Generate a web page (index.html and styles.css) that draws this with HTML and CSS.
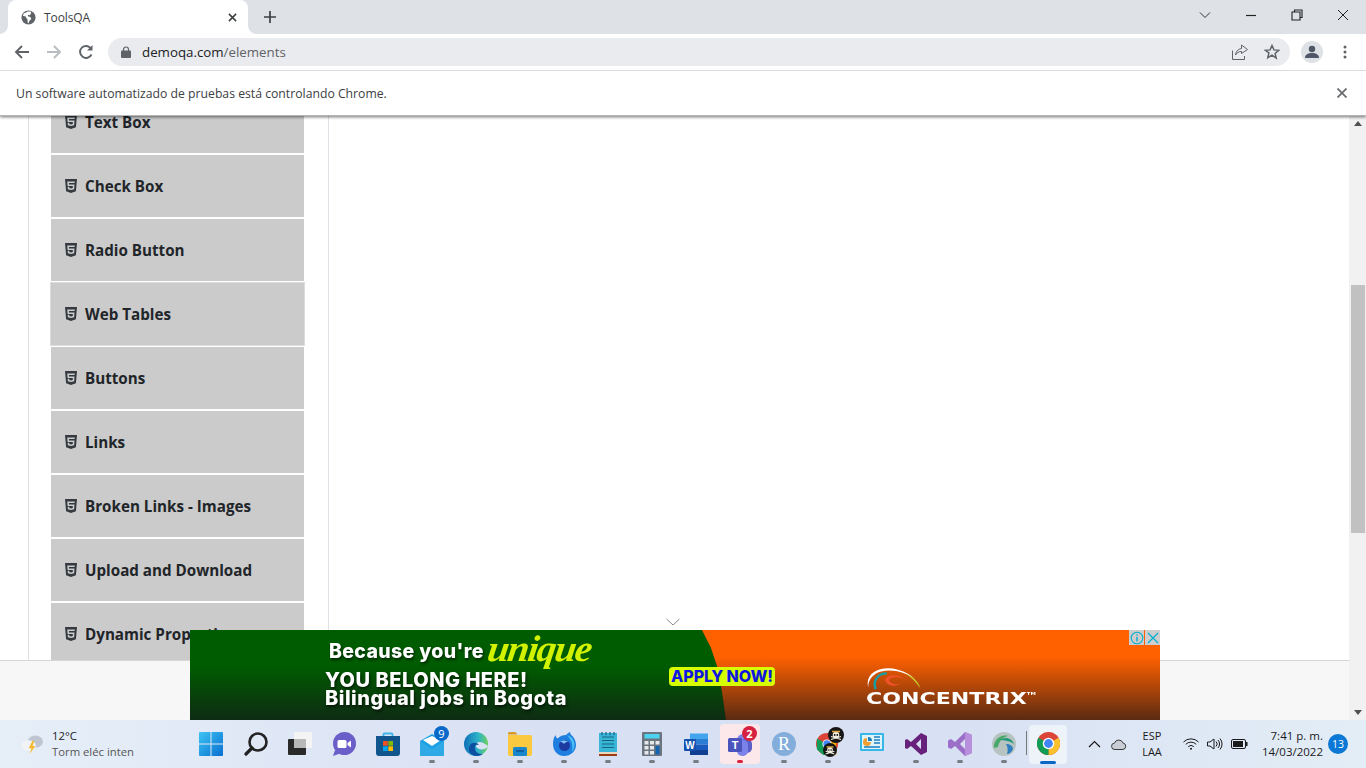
FILE: index.html
```html
<!DOCTYPE html>
<html lang="es">
<head>
<meta charset="utf-8">
<title>ToolsQA</title>
<link rel="stylesheet" href="styles.css">
</head>
<body>
<div class="screen">
  <header class="chrome">
    <div class="tabstrip">
      <div class="tab">
        <svg class="favicon" viewBox="0 0 16 16"><circle cx="8" cy="8" r="7.5" fill="#5f6368"/><path d="M7 1.500 5 3 3 3.500 2 6l3 1 1 2 1 1v3l1 1.500 1-3 2-2-1-2-2-.5-1-1 1-1 1.500.5L11 3l-1-1.500z" fill="#fff"/></svg>
        <span class="tab-title">ToolsQA</span>
        <svg class="tab-close" viewBox="0 0 10 10"><path d="M1 1l8 8M9 1l-8 8" stroke="#3c4043" stroke-width="1.700"/></svg>
      </div>
      <svg class="newtab" viewBox="0 0 12 12"><path d="M6 0v12M0 6h12" stroke="#3c4043" stroke-width="1.700"/></svg>
      <div class="winctl">
        <span class="winbtn"><svg class="wi" viewBox="0 0 12 12"><path d="M1 3.500l5 5 5-5" fill="none" stroke="#333" stroke-width="1"/></svg></span>
        <span class="winbtn"><svg class="wi" viewBox="0 0 12 12"><path d="M1 6.500h10" stroke="#222" stroke-width="1.200"/></svg></span>
        <span class="winbtn"><svg class="wi" viewBox="0 0 12 12"><path d="M3.500 2.500V1h7.500v7.500H9M1 3h8v8H1z" fill="none" stroke="#222" stroke-width="1.100"/></svg></span>
        <span class="winbtn"><svg class="wi" viewBox="0 0 12 12"><path d="M1 1l10 10M11 1L1 11" stroke="#222" stroke-width="1"/></svg></span>
      </div>
    </div>
    <div class="toolbar">
      <svg class="nav" viewBox="0 0 16 16"><path d="M15 8H2M8 2 2 8l6 6" fill="none" stroke="#5f6368" stroke-width="1.900"/></svg>
      <svg class="nav" viewBox="0 0 16 16"><path d="M1 8h13M8 2l6 6-6 6" fill="none" stroke="#b9bcc0" stroke-width="1.900"/></svg>
      <svg class="nav" viewBox="0 0 16 16"><path d="M13.500 10.500A6 6 0 1 1 13 4.500" fill="none" stroke="#5f6368" stroke-width="1.900"/><path d="M14.500 1v5.500H9z" fill="#5f6368"/></svg>
      <div class="omnibox">
        <svg class="lock" viewBox="0 0 10 12"><path d="M2.500 5V3.500a2.500 2.500 0 0 1 5 0V5" fill="none" stroke="#5f6368" stroke-width="1.200"/><rect y="4.500" width="10" height="7.500" rx="1" fill="#5f6368"/></svg>
        <span class="url"><span class="host">demoqa.com</span>/elements</span>
        <svg class="omni-ic" viewBox="0 0 16 16"><path d="M.5 6.500v9h12V12" fill="none" stroke="#5f6368"/><path d="M9.500 1l6 4.500-6 4V7.500C7 7.500 5 8.500 3.500 11c.3-3.500 2.500-6 6-6.500z" fill="none" stroke="#5f6368"/></svg>
        <svg class="omni-ic" viewBox="0 0 16 16"><path d="M8 1.500l1.900 4.400 4.800.4-3.600 3.100 1.100 4.700L8 11.100l-4.200 2.500 1.100-4.700L1.300 6.300l4.800-.4z" fill="none" stroke="#5f6368" stroke-width="1.500"/></svg>
      </div>
      <span class="avatar"><svg viewBox="0 0 14 14"><circle cx="7" cy="4" r="3.200" fill="#4d5766"/><path d="M0 13c0-3.500 3-5 7-5s7 1.500 7 5z" fill="#4d5766"/></svg></span>
      <svg class="dots" viewBox="0 0 4 14"><circle cx="2" cy="2" r="1.500" fill="#5f6368"/><circle cx="2" cy="7" r="1.500" fill="#5f6368"/><circle cx="2" cy="12" r="1.500" fill="#5f6368"/></svg>
    </div>
    <div class="infobar">
      <span class="info-text">Un software automatizado de pruebas está controlando Chrome.</span>
      <svg class="info-close" viewBox="0 0 10 10"><path d="M.5.500l9 9M9.500.500l-9 9" stroke="#6a6d70" stroke-width="1.800"/></svg>
    </div>
  </header>

  <main class="viewport">
    <div class="page">
      <div class="content">
        <nav class="sidebar">
          <ul class="menu">
            <li class="item"><svg class="h5" viewBox="0 0 384 512"><path d="M0 32l34.900 395.800L191.500 480l157.600-52.200L384 32H0zm308.200 127.900H124.400l4.100 49.400h175.600l-13.600 148.400-97.900 27v.3h-1.100l-98.700-27.300-6-75.800h47.700L138 320l53.500 14.500 53.700-14.500 6-62.200H84.300L71.500 112.200h241.100l-4.400 47.700z"/></svg>Text Box</li>
            <li class="item"><svg class="h5" viewBox="0 0 384 512"><path d="M0 32l34.900 395.800L191.500 480l157.600-52.200L384 32H0zm308.200 127.900H124.400l4.100 49.400h175.600l-13.600 148.400-97.900 27v.3h-1.100l-98.700-27.300-6-75.800h47.700L138 320l53.500 14.500 53.700-14.500 6-62.200H84.300L71.500 112.200h241.100l-4.400 47.700z"/></svg>Check Box</li>
            <li class="item"><svg class="h5" viewBox="0 0 384 512"><path d="M0 32l34.900 395.800L191.500 480l157.600-52.200L384 32H0zm308.200 127.900H124.400l4.100 49.400h175.600l-13.600 148.400-97.900 27v.3h-1.100l-98.700-27.300-6-75.800h47.700L138 320l53.500 14.500 53.700-14.500 6-62.200H84.300L71.500 112.200h241.100l-4.400 47.700z"/></svg>Radio Button</li>
            <li class="item item-hover"><svg class="h5" viewBox="0 0 384 512"><path d="M0 32l34.900 395.800L191.500 480l157.600-52.200L384 32H0zm308.200 127.900H124.400l4.100 49.400h175.600l-13.600 148.400-97.900 27v.3h-1.100l-98.700-27.300-6-75.800h47.700L138 320l53.500 14.500 53.700-14.500 6-62.200H84.300L71.500 112.200h241.100l-4.400 47.700z"/></svg>Web Tables</li>
            <li class="item"><svg class="h5" viewBox="0 0 384 512"><path d="M0 32l34.900 395.800L191.500 480l157.600-52.200L384 32H0zm308.200 127.900H124.400l4.100 49.400h175.600l-13.600 148.400-97.900 27v.3h-1.100l-98.700-27.300-6-75.800h47.700L138 320l53.500 14.500 53.700-14.500 6-62.200H84.300L71.500 112.200h241.100l-4.400 47.700z"/></svg>Buttons</li>
            <li class="item"><svg class="h5" viewBox="0 0 384 512"><path d="M0 32l34.900 395.800L191.500 480l157.600-52.200L384 32H0zm308.200 127.900H124.400l4.100 49.400h175.600l-13.600 148.400-97.900 27v.3h-1.100l-98.700-27.300-6-75.800h47.700L138 320l53.500 14.500 53.700-14.500 6-62.200H84.300L71.500 112.200h241.100l-4.400 47.700z"/></svg>Links</li>
            <li class="item"><svg class="h5" viewBox="0 0 384 512"><path d="M0 32l34.900 395.800L191.500 480l157.600-52.200L384 32H0zm308.200 127.900H124.400l4.100 49.400h175.600l-13.600 148.400-97.900 27v.3h-1.100l-98.700-27.300-6-75.800h47.700L138 320l53.500 14.500 53.700-14.500 6-62.200H84.300L71.500 112.200h241.100l-4.400 47.700z"/></svg>Broken Links - Images</li>
            <li class="item"><svg class="h5" viewBox="0 0 384 512"><path d="M0 32l34.900 395.800L191.500 480l157.600-52.200L384 32H0zm308.200 127.900H124.400l4.100 49.400h175.600l-13.600 148.400-97.900 27v.3h-1.100l-98.700-27.300-6-75.800h47.700L138 320l53.500 14.500 53.700-14.500 6-62.200H84.300L71.500 112.200h241.100l-4.400 47.700z"/></svg>Upload and Download</li>
            <li class="item"><svg class="h5" viewBox="0 0 384 512"><path d="M0 32l34.900 395.800L191.500 480l157.600-52.200L384 32H0zm308.200 127.900H124.400l4.100 49.400h175.600l-13.600 148.400-97.900 27v.3h-1.100l-98.700-27.300-6-75.800h47.700L138 320l53.500 14.500 53.700-14.500 6-62.200H84.300L71.500 112.200h241.100l-4.400 47.700z"/></svg>Dynamic Properties</li>
          </ul>
        </nav>
      </div>
      <div class="footer"></div>
    </div>
    <aside class="scrollbar">
      <span class="arrow-up"></span>
      <span class="thumb"></span>
      <span class="arrow-down"></span>
    </aside>

    <svg class="ad-chevron" viewBox="0 0 14 8"><path d="M.5 1 7 7l6.500-6" fill="none" stroke="#8a8a8a" stroke-width="1"/></svg>
    <section class="ad">
      <div class="ad-copy">
        <div class="ad-line1"><span>Because you're</span><span class="unique">unique</span></div>
        <div class="ad-line2">YOU BELONG HERE!</div>
        <div class="ad-line3">Bilingual jobs in Bogota</div>
      </div>
      <div class="ad-apply">APPLY NOW!</div>
      <div class="ad-logo">
        <svg class="ad-swoosh" viewBox="0 0 70 30"><path d="M2 24C-2 8 16 0 34 5c8 2 14 6 18 10-10-7-24-11-36-8C8 9 2 15 2 24z" fill="#fff"/><path d="M10 26C6 15 14 9 22 9" fill="none" stroke="#12a0a8" stroke-width="2.500"/><path d="M20 16c2-6 14-7 20-1-6-3-12-3-16 1 3 5 9 6 13 3-4 5-15 4-17-3z" fill="#f0522a"/><path d="M42 9c8 3 14 9 16 16-4-6-9-11-16-16z" fill="#c7cc2a"/></svg>
        <span class="ad-brand">CONCENTRIX<sup class="ad-tm">TM</sup></span>
      </div>
      <div class="ad-flags">
        <span class="ad-flag"><svg viewBox="0 0 14 14"><circle cx="7" cy="7" r="5.800" fill="none" stroke="#00aecd" stroke-width="1.100"/><path d="M7 3.500v1.300M7 6v4.500" stroke="#00aecd" stroke-width="1.400"/></svg></span>
        <span class="ad-flag"><svg viewBox="0 0 14 14"><path d="M2 2l10 10M12 2 2 12" stroke="#00aecd" stroke-width="1.200"/></svg></span>
      </div>
    </section>
  </main>

  <footer class="taskbar">
    <div class="weather">
      <svg class="weather-ic" viewBox="0 0 24 22"><ellipse cx="15" cy="8" rx="8" ry="6.500" fill="#bfc6d2"/><ellipse cx="8" cy="12" rx="7.500" ry="5.500" fill="#f2f3f6"/><path d="M12 7l-4 8h3l-2 6 6-8.500h-3l2-5.500z" fill="#f4b82a"/></svg>
      <div class="weather-text"><div class="temp">12°C</div><div class="cond">Torm eléc inten</div></div>
    </div>
    <div class="apps">
      <span class="app app-start"><svg class="ic" viewBox="0 0 24 24"><defs><linearGradient id="w" x1="0" y1="0" x2="1" y2="1"><stop offset="0" stop-color="#3cc4f4"/><stop offset="1" stop-color="#0a6fd0"/></linearGradient></defs><path d="M0 1a1 1 0 0 1 1-1h10.500v11.500H0zM12.500 0H23a1 1 0 0 1 1 1v10.500H12.500zM0 12.500h11.500V24H1a1 1 0 0 1-1-1zM12.500 12.500H24V23a1 1 0 0 1-1 1H12.500z" fill="url(#w)"/></svg></span>
      <span class="app"><svg class="ic" viewBox="0 0 24 24"><circle cx="14" cy="10" r="8.500" fill="none" stroke="#222" stroke-width="2.600"/><path d="M8 16l-6 6" stroke="#222" stroke-width="3.200" stroke-linecap="round"/></svg></span>
      <span class="app"><svg class="ic" viewBox="0 0 24 24"><rect x="0" y="7" width="18" height="16" rx="1" fill="#2a2a2a"/><rect x="6" y="0" width="18" height="16" rx="1" fill="#f4f4f4"/><rect x="6" y="7" width="12" height="9" fill="#b9b9b9"/></svg></span>
      <span class="app"><svg class="ic" viewBox="0 0 24 24"><circle cx="12.500" cy="11.500" r="11.500" fill="#6a5fc9"/><path d="M3 18l-2 6 7-2.500z" fill="#6a5fc9"/><rect x="5.500" y="8" width="9" height="8" rx="1.500" fill="#fff"/><path d="M15.500 11l3.500-2.500v7L15.500 13z" fill="#fff"/></svg></span>
      <span class="app"><svg class="ic" viewBox="0 0 24 24"><path d="M7.500 5V2.500a1 1 0 0 1 1-1h7a1 1 0 0 1 1 1V5" fill="none" stroke="#38b6e8" stroke-width="1.800"/><path d="M0 4h24v17a3 3 0 0 1-3 3H3a3 3 0 0 1-3-3z" fill="#10558c"/><rect x="7" y="9" width="4.700" height="4.700" fill="#f25022"/><rect x="12.300" y="9" width="4.700" height="4.700" fill="#7fba00"/><rect x="7" y="14.300" width="4.700" height="4.700" fill="#00a4ef"/><rect x="12.300" y="14.300" width="4.700" height="4.700" fill="#ffb900"/></svg></span>
      <span class="app app-badge"><svg class="ic" viewBox="0 0 24 24"><path d="M0 9l12-7 12 7v15H0z" fill="#1ba1e2"/><path d="M3 8l9-4 9 4-9 6z" fill="#fff"/><path d="M0 9l12 8 12-8v15H0z" fill="#2fa8e6"/></svg><span class="badge badge-blue">9</span><span class="run"></span></span>
      <span class="app"><svg class="ic" viewBox="0 0 24 24"><defs><linearGradient id="e" x1="0" y1="0" x2="1" y2="0"><stop offset="0" stop-color="#0e6fb8"/><stop offset=".6" stop-color="#2fb4c8"/><stop offset="1" stop-color="#6fd05a"/></linearGradient></defs><circle cx="12" cy="12" r="12" fill="url(#e)"/><path d="M24 14c-1 3-6 4-9 3-3-1-4-4-2-6 2-2 6-1 11 3z" fill="#d9e1f3"/><path d="M13 24C6 24 3 18 6 13c2-3 7-3 9 0-3-1-5 1-4 4 .5 3 3 5 8 5-2 1-4 2-6 2z" fill="#0b4ea2"/></svg><span class="run"></span></span>
      <span class="app"><svg class="ic" viewBox="0 0 24 24"><path d="M0 1.500a1.500 1.500 0 0 1 1.500-1.500h6l2 2.500H0z" fill="#d89a22"/><path d="M0 3h22.500a1.500 1.500 0 0 1 1.500 1.500V22a2 2 0 0 1-2 2H2a2 2 0 0 1-2-2z" fill="#fbc93f"/><rect x="5" y="15" width="14" height="9" rx="1.500" fill="#1a86cc"/><rect x="8" y="18" width="8" height="2" fill="#0d5fa0"/></svg><span class="run"></span></span>
      <span class="app"><svg class="ic" viewBox="0 0 24 24"><path d="M1 12C1 8 2 5 3.500 3c.3 2 1 3 2 3.500C8 4 11 3 14 3c1-1 2-2 4-3 0 1.500 1 3 2.500 4C23 7 24 10 24 13c0 6-5 11-12 11S1 18 1 12z" fill="#1f7fe0"/><path d="M15 3c4 1 7 4 7.500 9 .3 3-1 6-3 8 2-5 1-11-4.500-17z" fill="#4ac0f5"/><circle cx="12.500" cy="13.500" r="5.500" fill="#1c3aa0"/><path d="M8 10c2-2 6-2 8 0-2 0-3 .5-4 2-1-1.500-2.500-2-4-2z" fill="#7cc4f8"/></svg><span class="run"></span></span>
      <span class="app"><svg class="ic" viewBox="0 0 24 24"><rect x="3" y="1" width="18" height="21" fill="#37b4d6"/><path d="M6 5h12M6 8.500h12M6 12h12M6 15.500h12" stroke="#14667f" stroke-width="1.200"/><path d="M6 0v3M10 0v3M14 0v3M18 0v3" stroke="#1a6680" stroke-width="1.300"/><rect x="3" y="20" width="18" height="2" fill="#e8d8c0"/><rect x="3" y="22" width="18" height="2" fill="#9a3b14"/></svg><span class="run"></span></span>
      <span class="app"><svg class="ic" viewBox="0 0 24 24"><rect x="2" y="0" width="20" height="24" rx="1" fill="#6b7580"/><rect x="4.500" y="2" width="15" height="4.500" fill="#4fd2f0"/><path d="M4.500 9h4v3.500h-4zM10 9h4v3.500h-4zM15.500 9h4v3.500h-4zM4.500 14h4v3.500h-4zM10 14h4v3.500h-4zM4.500 19h4v3.500h-4zM10 19h4v3.500h-4z" fill="#e6e8ea"/><rect x="15.500" y="14" width="4" height="8.500" fill="#1564b0"/></svg><span class="run"></span></span>
      <span class="app"><svg class="ic" viewBox="0 0 24 24"><rect x="6" y="1.500" width="18" height="5.500" fill="#41a5ee"/><rect x="6" y="7" width="18" height="5.500" fill="#2b7cd3"/><rect x="6" y="12.500" width="18" height="5.500" fill="#185abd"/><rect x="6" y="18" width="18" height="5" fill="#103f91"/><rect x="0" y="7" width="12" height="12" rx="1" fill="#1552b0"/><text class="glyph-w" x="6" y="16.500">W</text></svg><span class="run"></span></span>
      <span class="app app-teams"><svg class="ic" viewBox="0 0 24 24"><circle cx="15" cy="8" r="6" fill="#7b83eb"/><rect x="12" y="7" width="12" height="14" rx="5" fill="#5b5fc7"/><rect x="9" y="8" width="11" height="16" rx="5" fill="#7b83eb"/><rect x="0" y="6" width="14" height="14" rx="1.500" fill="#4b53bc"/><text class="glyph-t" x="7" y="17">T</text></svg><span class="badge badge-red">2</span><span class="run run-red"></span></span>
      <span class="app"><span class="r-icon">R</span><span class="run"></span></span>
      <span class="app"><svg class="ic ic-chrome" viewBox="0 0 24 24"><circle cx="12" cy="12" r="12" fill="#db4437"/><path d="M12 12 22 5v19H12z" fill="#f4b400"/><path d="M12 12 1 6v12l7 6h6z" fill="#0f9d58"/><circle cx="12" cy="12" r="5" fill="#fff"/><circle cx="12" cy="12" r="4" fill="#4285f4"/></svg><svg class="skull skull-a" viewBox="0 0 16 16"><circle cx="8" cy="8" r="8" fill="#151515"/><path d="M3 12.500l10-3M13 12.500l-10-3" stroke="#f2eee0" stroke-width="1.300"/><circle cx="8" cy="8" r="3.300" fill="#f2eee0"/><path d="M4 4.500h8" stroke="#d9a441" stroke-width="1.600"/><circle cx="6.700" cy="8" r=".9" fill="#151515"/><circle cx="9.300" cy="8" r=".9" fill="#151515"/></svg><svg class="skull skull-b" viewBox="0 0 16 16"><circle cx="8" cy="8" r="8" fill="#151515"/><path d="M3 12.500l10-3M13 12.500l-10-3" stroke="#f2eee0" stroke-width="1.300"/><circle cx="8" cy="8" r="3.300" fill="#f2eee0"/><path d="M4 4.500h8" stroke="#d9a441" stroke-width="1.600"/><circle cx="6.700" cy="8" r=".9" fill="#151515"/><circle cx="9.300" cy="8" r=".9" fill="#151515"/></svg><span class="run"></span></span>
      <span class="app"><svg class="ic" viewBox="0 0 24 24"><rect y="1" width="24" height="18" rx="1" fill="#37b7e6"/><rect x="2" y="3" width="20" height="14" fill="#dff3fb"/><path d="M7 6a4 4 0 1 0 4 4H7z" fill="#f0a030"/><path d="M8 5a4 4 0 0 1 4 4H8z" fill="#1c7fc0"/><path d="M14 5h6M14 8h6M14 11h6M4 15h16" stroke="#1c7fc0" stroke-width="1.300"/></svg><span class="run"></span></span>
      <span class="app"><svg class="ic" viewBox="0 0 24 24"><path d="M17 1l6 3v16l-6 3-10-9-4 3-2-1V8l2-1 4 3zm0 6-5 5 5 5z" fill="#68217a" fill-rule="evenodd"/></svg><span class="run"></span></span>
      <span class="app"><svg class="ic" viewBox="0 0 24 24"><path d="M17 0l7 3v18l-7 3L7 14l-4 3-3-1.500v-7L3 7l4 3zm0 7-5 5 5 5z" fill="#9b6fc8" fill-rule="evenodd"/><path d="M17 0l7 3v18l-7 3z" fill="#b78fdc"/></svg><span class="run"></span></span>
      <span class="app"><svg class="ic" viewBox="0 0 24 24"><circle cx="12" cy="12" r="12" fill="#b7c3c0"/><path d="M2 16C1 8 9 2 16 4c-5 1-9 5-10 11z" fill="#48a868"/><path d="M8 8c5-4 12-2 14 4-4-3-9-4-14-4z" fill="#1e9a78"/><path d="M14 12c4 0 7 2 7 5-1 3-4 5-6 5 1-3 1-7-1-10z" fill="#2f7fc0"/></svg><span class="run"></span></span>
      <span class="task-sep"></span>
      <span class="app app-active"><svg class="ic ic-big" viewBox="0 0 24 24"><circle cx="12" cy="12" r="12" fill="#db4437"/><path d="M12 12 22.400 6A12 12 0 0 1 12 24z" fill="#fbc02d"/><path d="M12 12 12 24A12 12 0 0 1 1.600 6z" fill="#0f9d58"/><circle cx="12" cy="12" r="6" fill="#fff"/><circle cx="12" cy="12" r="4.600" fill="#4285f4"/></svg><span class="run run-blue"></span></span>
    </div>
    <div class="tray">
      <svg class="tray-chev" viewBox="0 0 12 8"><path d="M.5 7 6 1.500 11.500 7" fill="none" stroke="#1b1b1b" stroke-width="1.200"/></svg>
      <svg class="tray-cloud" viewBox="0 0 16 11"><path d="M4 10.500a3.200 3.200 0 0 1-.5-6.400A4.500 4.500 0 0 1 12 4a3.300 3.300 0 0 1 0 6.500z" fill="#c9ced6" stroke="#3a3a3a"/></svg>
      <div class="lang"><div>ESP</div><div>LAA</div></div>
      <svg class="tray-wifi" viewBox="0 0 16 12"><path d="M.5 4a10.500 10.500 0 0 1 15 0M2.800 6.300a7.300 7.300 0 0 1 10.400 0M5.200 8.700a4 4 0 0 1 5.600 0" fill="none" stroke="#1b1b1b" stroke-width="1"/><circle cx="8" cy="10.800" r="1" fill="#1b1b1b"/></svg>
      <svg class="tray-vol" viewBox="0 0 16 12"><path d="M.5 4h2.500L7 1v10L3 8H.5z" fill="none" stroke="#1b1b1b"/><path d="M9 3.500a3.500 3.500 0 0 1 0 5M11 2a6 6 0 0 1 0 8M13 .5a8.500 8.500 0 0 1 0 11" fill="none" stroke="#1b1b1b"/></svg>
      <svg class="tray-bat" viewBox="0 0 17 10"><rect x=".5" y=".5" width="14" height="9" rx="1.500" fill="none" stroke="#1b1b1b"/><rect x="2" y="2" width="10" height="6" fill="#1b1b1b"/><rect x="15" y="3" width="1.500" height="4" fill="#1b1b1b"/></svg>
      <div class="clock"><div>7:41 p. m.</div><div>14/03/2022</div></div>
      <span class="notif">13</span>
    </div>
  </footer>
</div>
</body>
</html>
```

FILE: styles.css
```css
* { box-sizing: border-box; }
html, body { margin: 0; padding: 0; height: 100%; overflow: hidden; }
body { font-family: "Open Sans", "Noto Sans", sans-serif; color: #202124; }
ul { list-style: none; margin: 0; padding: 0; }
svg { display: block; flex: none; }

.screen { width: 1366px; height: 768px; display: flex; flex-direction: column; overflow: hidden; position: relative; background: #fff; }

/* browser chrome */
.chrome { flex: none; position: relative; z-index: 3; background: #fff; box-shadow: 0 1px 3px rgba(0,0,0,.55); }
.tabstrip { height: 34px; background: #dee1e6; display: flex; align-items: center; }
.tab { width: 240px; height: 34px; margin-left: 8px; background: #fff; border-radius: 8px 8px 0 0; display: flex; align-items: center; padding: 0 11px 0 13px; position: relative; }
.tab::before, .tab::after { content: ""; position: absolute; bottom: 0; width: 8px; height: 8px; }
.tab::before { left: -8px; background: radial-gradient(circle at 0 0, transparent 7.500px, #fff 8px); }
.tab::after { right: -8px; background: radial-gradient(circle at 100% 0, transparent 7.500px, #fff 8px); }
.favicon { width: 15px; height: 15px; }
.tab-title { font-size: 12px; margin-left: 8px; flex: 1; color: #3c4043; letter-spacing: -.1px; }
.tab-close { width: 9px; height: 9px; }
.newtab { width: 12px; height: 12px; margin-left: 16px; }
.winctl { margin-left: auto; display: flex; }
.winbtn { width: 46px; height: 29px; display: flex; align-items: center; justify-content: center; margin-bottom: 5px; }
.wi { width: 12px; height: 12px; }

.toolbar { height: 37px; display: flex; align-items: center; padding: 0 0 1px 14px; border-bottom: 1px solid #dadce0; }
.nav { width: 16px; height: 16px; margin-right: 16px; }
.omnibox { width: 1182px; height: 28px; margin-left: -2px; border-radius: 14px; background: #e9ebee; display: flex; align-items: center; padding: 0 10px 0 13px; }
.lock { width: 10px; height: 12px; }
.url { font-size: 13.300px; margin-left: 11px; flex: 1; color: #5f6368; }
.host { color: #202124; }
.omni-ic { width: 16px; height: 16px; margin-left: 16px; }
.avatar { width: 22px; height: 22px; border-radius: 50%; background: #dee1e6; margin-left: 11px; display: flex; align-items: center; justify-content: center; }
.avatar svg { width: 14px; height: 14px; }
.dots { width: 4px; height: 14px; margin-left: 20px; }

.infobar { height: 45px; display: flex; align-items: center; justify-content: space-between; padding: 0 19px 0 16px; border-bottom: 1px solid #b5b5b5; }
.info-text { font-size: 12.230px; color: #3c4043; }
.info-close { width: 10px; height: 10px; }

/* page */
.viewport { flex: 1; min-height: 0; display: flex; position: relative; z-index: 1; }
.page { flex: 1; min-width: 0; display: flex; flex-direction: column; }
.content { flex: 1; min-height: 0; overflow: hidden; padding-left: 28px; }
.sidebar { width: 301px; height: 100%; border-left: 1px solid #dee2e6; border-right: 1px solid #dee2e6; padding-left: 22px; overflow: hidden; }
.menu { margin-top: -25px; width: 253px; }
.item { height: 62px; margin-bottom: 2px; background: #cbcbcb; display: flex; align-items: center; gap: 8px; padding-left: 14px; font-weight: 700; font-size: 15.200px; color: #212529; white-space: nowrap; }
.item-hover { margin-left: -1px; margin-right: -1px; width: 255px; height: 64px; margin-top: -1px; margin-bottom: 1px; padding-left: 15px; box-shadow: inset 0 0 0 1px #dcdcdc; }
.h5 { width: 12px; height: 16px; fill: #343a40; }
.footer { flex: none; height: 60px; background: #f7f7f7; border-top: 1px solid #d6d6d6; }

.scrollbar { flex: none; width: 17px; background: #f1f1f1; display: flex; flex-direction: column; align-items: center; }
.arrow-up { flex: none; margin-top: 5px; border: 4px solid transparent; border-top: 0; border-bottom: 5px solid #505050; }
.thumb { flex: none; width: 14px; height: 248px; margin-top: 159px; margin-left: 1px; background: #c1c1c1; }
.arrow-down { flex: none; margin-top: auto; margin-bottom: 5px; border: 4px solid transparent; border-bottom: 0; border-top: 5px solid #505050; }

/* ad overlays the page */
.ad-chevron { position: absolute; left: 666px; top: 502px; width: 14px; height: 8px; }
.ad { position: absolute; left: 190px; bottom: 0; width: 970px; height: 90px; display: flex; overflow: hidden; background: linear-gradient(#ff6000 0, #ff6000 30%, #5a2a12 100%); color: #fff; }
.ad::before { content: ""; position: absolute; inset: 0; width: 536px; background: linear-gradient(#005c00 0, #005c00 40%, #0e2b14 100%); clip-path: polygon(0 0, 512px 0, 521px 18px, 527px 36px, 532px 62px, 536px 90px, 0 90px); }
.ad-copy { position: relative; width: 479px; padding: 8px 0 0 135px; font-family: Inter, "Open Sans", sans-serif; font-weight: 800; font-size: 20px; line-height: 18px; letter-spacing: .5px; text-shadow: 1px 2px 3px rgba(0,0,0,.6); filter: blur(.3px); white-space: nowrap; }
.ad-line1 { display: flex; align-items: center; gap: 4px; height: 26px; margin: 0 0 7px 4px; font-size: 19.500px; letter-spacing: .35px; }
.unique { font-family: "Liberation Serif", serif; font-style: italic; font-weight: 700; font-size: 37px; color: #d2f200; letter-spacing: -1.500px; text-shadow: none; transform: skewX(-8deg) scaleX(1.050); transform-origin: left; margin-top: -4px; }
.ad-apply { position: relative; align-self: flex-start; margin-top: 37px; width: 106px; height: 19px; background: #d6ff00; border-radius: 4px; color: #1018e0; font-family: Inter, "Open Sans", sans-serif; font-weight: 800; font-size: 16px; line-height: 19px; text-align: center; white-space: nowrap; letter-spacing: -.1px; }
.ad-logo { position: relative; margin-left: 91px; padding-top: 35px; display: flex; flex-direction: column; }
.ad-swoosh { width: 66px; height: 28px; }
.ad-brand { font-family: "DejaVu Sans", sans-serif; font-weight: 700; font-size: 16.500px; line-height: 14px; margin-top: -1px; white-space: nowrap; transform: scaleX(1.340); transform-origin: left; filter: blur(.3px); }
.ad-tm { font-size: 4px; vertical-align: 9px; line-height: 0; }
.ad-flags { position: absolute; right: 0; top: 0; display: flex; gap: 1px; }
.ad-flag { width: 15px; height: 15px; background: #cdcdcd; display: flex; align-items: center; justify-content: center; }
.ad-flag svg { width: 14px; height: 14px; }

/* taskbar */
.taskbar { flex: none; height: 48px; position: relative; z-index: 2; display: flex; align-items: center; background: linear-gradient(90deg, #e6eff8 0, #d8e0f3 40%, #d8e1f3 70%, #e3edf6 100%); }
.weather { width: 190px; flex: none; display: flex; align-items: center; padding: 0 0 0 21px; gap: 8px; }
.weather-ic { width: 23px; height: 21px; }
.weather-text { font-size: 11.300px; line-height: 16px; }
.temp { color: #1b1b1b; }
.cond { color: #555; }
.apps { display: flex; align-items: center; height: 48px; flex: none; }
.app { width: 44px; height: 48px; position: relative; display: flex; align-items: center; justify-content: center; padding-bottom: 1px; }
.app-start { margin: 0 1px 0 -1px; }
.ic { width: 24px; height: 24px; }
.ic-chrome { width: 22px; height: 22px; margin-right: 3px; }
.ic-big { width: 23px; height: 23px; }
.run { position: absolute; left: 19px; bottom: 5px; width: 6px; height: 3px; border-radius: 2px; background: #777c85; }
.badge { position: absolute; right: 3px; top: 5px; width: 15px; height: 15px; border-radius: 50%; color: #fff; font-size: 11px; line-height: 15px; text-align: center; }
.badge-blue { background: #0a69c8; right: 5px; top: 6px; }
.badge-red { background: #d6213f; font-weight: 700; right: 3px; top: 6px; }
.app-teams { width: 40px; margin: 0 2px; }
.app-teams::before { content: ""; position: absolute; inset: 4px 0; border-radius: 4px; background: #fce8ea; }
.app-teams .ic { position: relative; }
.app-teams .badge, .app-teams .run { z-index: 1; }
.run-red { background: #d6213f; left: 17px; }
.glyph-w { font-family: "Liberation Sans", sans-serif; font-weight: 700; font-size: 10px; fill: #fff; text-anchor: middle; }
.glyph-t { font-family: "Liberation Sans", sans-serif; font-weight: 700; font-size: 11px; fill: #fff; text-anchor: middle; }
.r-icon { width: 24px; height: 24px; border-radius: 50%; background: #83aedc; color: #fff; font-family: "Liberation Serif", serif; font-size: 18px; line-height: 24px; text-align: center; }
.skull { position: absolute; width: 16px; height: 16px; }
.skull-a { left: 22px; top: 7px; }
.skull-b { left: 17px; top: 23px; width: 14px; height: 14px; }
.task-sep { width: 1px; height: 24px; background: #777; margin: 0 2px 2px 0; }
.app-active { width: 38px; }
.app-active::before { content: ""; position: absolute; inset: 5px 0 4px; border-radius: 4px; background: #eef3fa; }
.app-active .ic { position: relative; }
.run-blue { left: 11px; width: 16px; background: #0a69c8; bottom: 4px; }

.tray { flex: 1; display: flex; align-items: center; height: 48px; padding-left: 21px; color: #1b1b1b; }
.tray-chev { width: 13px; height: 8px; }
.tray-cloud { width: 16px; height: 11px; margin-left: 10px; }
.lang { width: 34px; margin-left: 8px; text-align: center; font-size: 11px; line-height: 16px; }
.tray-wifi { width: 16px; height: 12px; margin-left: 14px; }
.tray-vol { width: 16px; height: 12px; margin-left: 8px; }
.tray-bat { width: 17px; height: 10px; margin-left: 8px; }
.clock { width: 76px; margin-left: -1px; text-align: right; font-size: 11.500px; line-height: 16px; }
.notif { width: 20px; height: 20px; margin-left: 5px; border-radius: 50%; background: #0a78d4; color: #fff; font-size: 10.500px; line-height: 20px; text-align: center; }
```
